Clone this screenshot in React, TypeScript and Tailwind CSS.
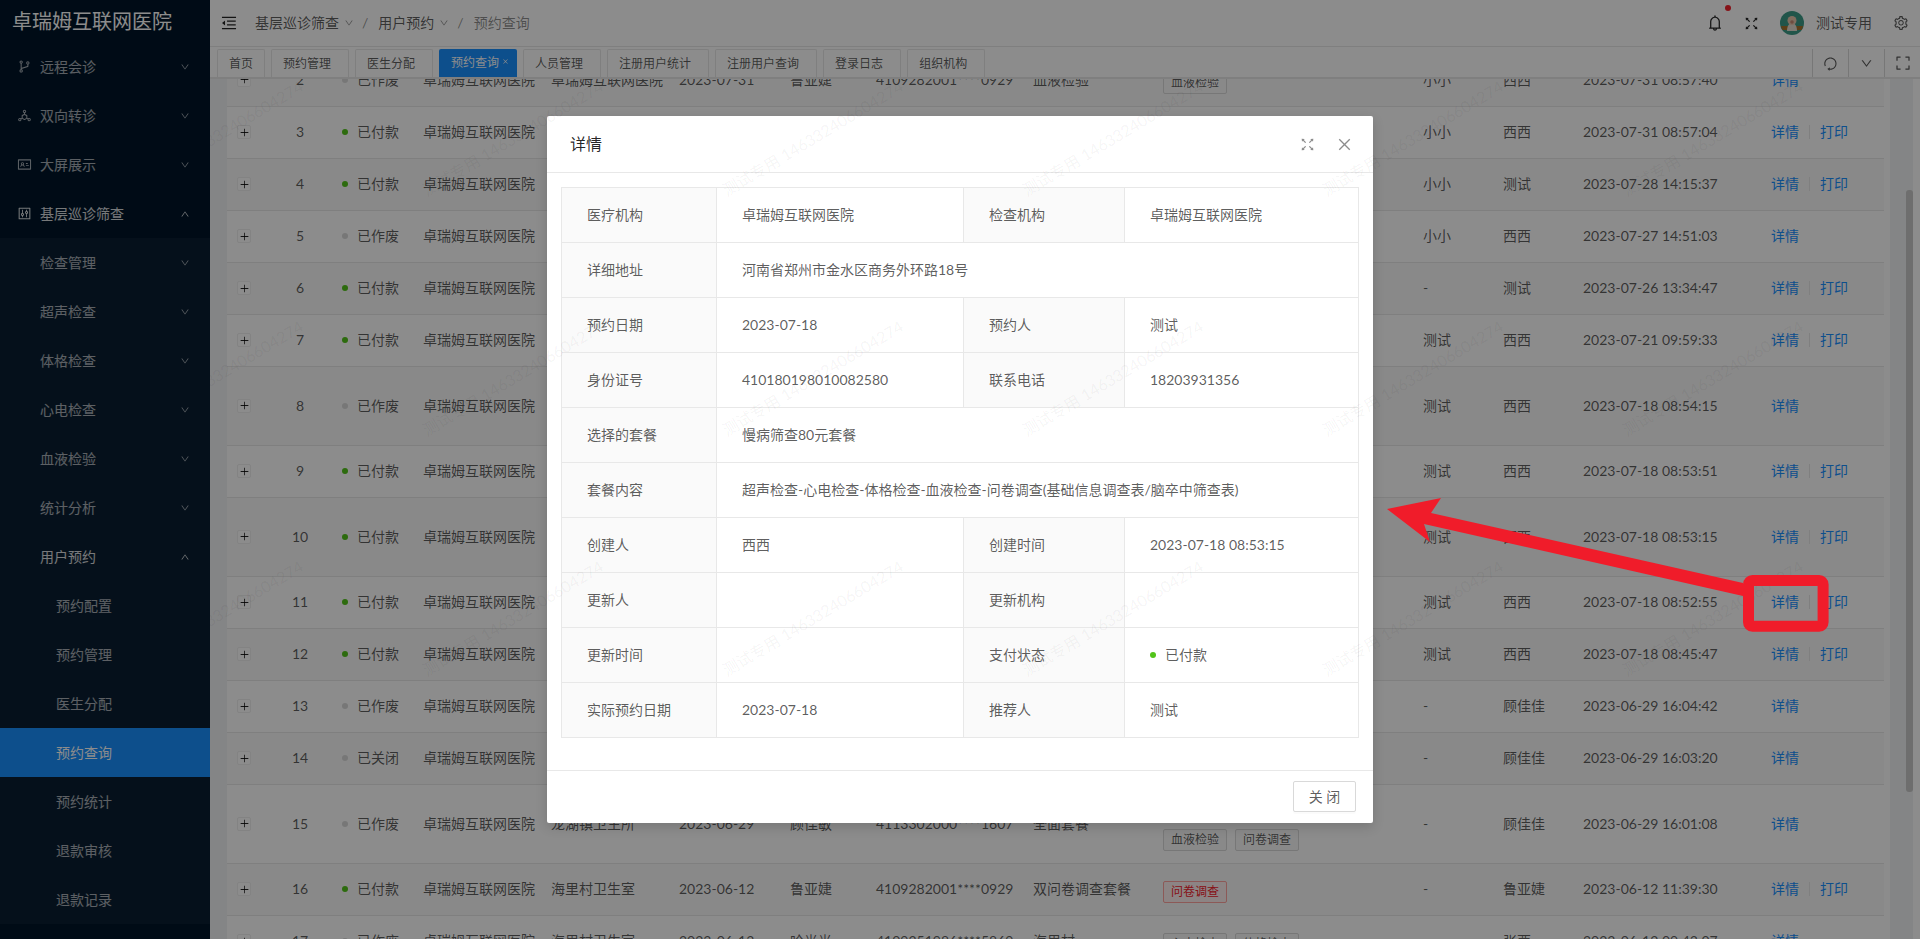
import {
  AiOutlineBell,
  AiOutlineBranches,
  AiOutlineClose,
  AiOutlineControl,
  AiOutlineDeploymentUnit,
  AiOutlineDown,
  AiOutlineExpand,
  AiOutlineFullscreen,
  AiOutlineIdcard,
  AiOutlineMenuFold,
  AiOutlinePlus,
  AiOutlineReload,
  AiOutlineSetting,
  AiOutlineUp,
} from 'react-icons/ai';

const topMenu = [
  { label: '远程会诊', icon: AiOutlineBranches },
  { label: '双向转诊', icon: AiOutlineDeploymentUnit },
  { label: '大屏展示', icon: AiOutlineIdcard },
];

const subMenu = ['检查管理', '超声检查', '体格检查', '心电检查', '血液检验', '统计分析'];
const leafMenu = ['预约配置', '预约管理', '医生分配', '预约查询', '预约统计', '退款审核', '退款记录'];
const tabs = ['首页', '预约管理', '医生分配', '预约查询', '人员管理', '注册用户统计', '注册用户查询', '登录日志', '组织机构'];

type Row = {
  no: number;
  status: string;
  // rows 3-14 sit behind the modal, so these stay empty there
  site?: string;
  date?: string;
  name?: string;
  idNo?: string;
  pkg?: string;
  tags?: string[];
  tall?: boolean;
  red?: boolean;
  creator: string;
  updater: string;
  time: string;
  print: boolean;
};

const rows: Row[] = [
  { no: 2, status: '已作废', site: '卓瑞姆互联网医院', date: '2023-07-31', name: '鲁亚婕', idNo: '4109282001****0929', pkg: '血液检验', tags: ['血液检验'], creator: '小小', updater: '西西', time: '2023-07-31 08:57:40', print: false },
  { no: 3, status: '已付款', creator: '小小', updater: '西西', time: '2023-07-31 08:57:04', print: true },
  { no: 4, status: '已付款', creator: '小小', updater: '测试', time: '2023-07-28 14:15:37', print: true },
  { no: 5, status: '已作废', creator: '小小', updater: '西西', time: '2023-07-27 14:51:03', print: false },
  { no: 6, status: '已付款', creator: '-', updater: '测试', time: '2023-07-26 13:34:47', print: true },
  { no: 7, status: '已付款', creator: '测试', updater: '西西', time: '2023-07-21 09:59:33', print: true },
  { no: 8, status: '已作废', tall: true, creator: '测试', updater: '西西', time: '2023-07-18 08:54:15', print: false },
  { no: 9, status: '已付款', creator: '测试', updater: '西西', time: '2023-07-18 08:53:51', print: true },
  { no: 10, status: '已付款', tall: true, creator: '测试', updater: '西西', time: '2023-07-18 08:53:15', print: true },
  { no: 11, status: '已付款', creator: '测试', updater: '西西', time: '2023-07-18 08:52:55', print: true },
  { no: 12, status: '已付款', creator: '测试', updater: '西西', time: '2023-07-18 08:45:47', print: true },
  { no: 13, status: '已作废', creator: '-', updater: '顾佳佳', time: '2023-06-29 16:04:42', print: false },
  { no: 14, status: '已关闭', creator: '-', updater: '顾佳佳', time: '2023-06-29 16:03:20', print: false },
  { no: 15, status: '已作废', tall: true, site: '龙湖镇卫生所', date: '2023-06-29', name: '顾佳敏', idNo: '4113302000****1607', pkg: '全面套餐', tags: ['血液检验', '问卷调查'], creator: '-', updater: '顾佳佳', time: '2023-06-29 16:01:08', print: false },
  { no: 16, status: '已付款', site: '海里村卫生室', date: '2023-06-12', name: '鲁亚婕', idNo: '4109282001****0929', pkg: '双问卷调查套餐', tags: ['问卷调查'], red: true, creator: '-', updater: '鲁亚婕', time: '2023-06-12 11:39:30', print: true },
  { no: 17, status: '已作废', site: '海里村卫生室', date: '2023-06-13', name: '哈光光', idNo: '4109251986****5869', pkg: '海里村', tags: ['心电检查', '体格检查'], creator: '', updater: '张西', time: '2023-06-12 09:43:07', print: false },
];

const details = [
  [['医疗机构', '卓瑞姆互联网医院'], ['检查机构', '卓瑞姆互联网医院']],
  [['详细地址', '河南省郑州市金水区商务外环路18号']],
  [['预约日期', '2023-07-18'], ['预约人', '测试']],
  [['身份证号', '410180198010082580'], ['联系电话', '18203931356']],
  [['选择的套餐', '慢病筛查80元套餐']],
  [['套餐内容', '超声检查-心电检查-体格检查-血液检查-问卷调查(基础信息调查表/脑卒中筛查表)']],
  [['创建人', '西西'], ['创建时间', '2023-07-18 08:53:15']],
  [['更新人', ''], ['更新机构', '']],
  [['更新时间', ''], ['支付状态', 'paid']],
  [['实际预约日期', '2023-07-18'], ['推荐人', '测试']],
];

function Sidebar() {
  return (
    <aside className="flex h-full w-[210px] shrink-0 flex-col bg-[#001529] text-sm text-white/65">
      <div className="flex h-[42px] items-center pl-[12px] text-[20px] text-white">卓瑞姆互联网医院</div>
      {topMenu.map((m) => (
        <div key={m.label} className="flex h-[49px] items-center pl-[17px] pr-[20px]">
          <m.icon size={15} />
          <span className="ml-[8px]">{m.label}</span>
          <AiOutlineDown size={10} className="ml-auto" />
        </div>
      ))}
      <div className="flex h-[49px] items-center pl-[17px] pr-[20px] text-white/85">
        <AiOutlineControl size={15} />
        <span className="ml-[8px]">基层巡诊筛查</span>
        <AiOutlineUp size={10} className="ml-auto" />
      </div>
      <div className="bg-[#0a1e32]">
        {subMenu.map((m) => (
          <div key={m} className="flex h-[49px] items-center pl-[40px] pr-[20px]">
            <span>{m}</span>
            <AiOutlineDown size={10} className="ml-auto" />
          </div>
        ))}
        <div className="flex h-[49px] items-center pl-[40px] pr-[20px] text-white/85">
          <span>用户预约</span>
          <AiOutlineUp size={10} className="ml-auto" />
        </div>
        {leafMenu.map((m) => (
          <div
            key={m}
            className={`flex h-[49px] items-center pl-[56px] ${m === '预约查询' ? 'bg-[#1890ff] text-white' : ''}`}
          >
            {m}
          </div>
        ))}
      </div>
    </aside>
  );
}

function Header() {
  return (
    <header className="flex h-[47px] shrink-0 items-center border-b border-[#e8e8e8] bg-white pl-[10px] pr-[11px] text-sm text-black/65">
      <AiOutlineMenuFold size={18} className="text-black/85" />
      <span className="ml-[17px]">基层巡诊筛查</span>
      <AiOutlineDown size={10} className="ml-[5px] text-black/45" />
      <span className="ml-[8px] text-black/45">/</span>
      <span className="ml-[10px]">用户预约</span>
      <AiOutlineDown size={10} className="ml-[5px] text-black/45" />
      <span className="ml-[8px] text-black/45">/</span>
      <span className="ml-[10px] text-black/45">预约查询</span>

      <span className="relative ml-auto">
        <AiOutlineBell size={18} className="text-black/85" />
        <span className="absolute right-[-7px] top-[-9px] h-[6px] w-[6px] rounded-full bg-[#f5222d]" />
      </span>
      <AiOutlineFullscreen size={17} className="ml-[19px] text-black/85" />
      <svg viewBox="0 0 24 24" className="ml-[20px] h-[24px] w-[24px] shrink-0">
        <circle cx="12" cy="12" r="12" fill="#3c9c88" />
        <path d="M1 15h22a12 12 0 0 1-1.5 4H2.500A12 12 0 0 1 1 15z" fill="#a8742c" />
        <path d="M7 20c0-5 2-8 5-8s5 3 5 8z" fill="#e6ddd0" />
        <circle cx="12" cy="9.500" r="4.500" fill="#e9c6ac" />
        <circle cx="12" cy="11" r="1.800" fill="#c98a74" />
      </svg>
      <span className="ml-[12px]">测试专用</span>
      <AiOutlineSetting size={16} className="ml-[21px]" />
    </header>
  );
}

function TabBar() {
  return (
    <div className="flex h-[32px] shrink-0 border-b-2 border-[#e8e8e8] bg-white pl-[7px] text-xs text-black/65">
      <div className="flex gap-[6px] pt-[2px]">
        {tabs.map((t, i) =>
          t === '预约查询' ? (
            <div key={t} className="flex items-center rounded-t-[2px] bg-[#1890ff] pl-[12px] pr-[8px] text-white">
              {t}
              <AiOutlineClose size={7} className="mb-[4px] ml-[3px]" />
            </div>
          ) : (
            <div
              key={t}
              className={`flex items-center rounded-t-[2px] border border-b-0 border-[#e8e8e8] pl-[11px] ${i === 0 ? 'pr-[11px]' : 'pr-[17px]'}`}
            >
              {t}
            </div>
          ),
        )}
      </div>
      <div className="ml-auto flex pt-[2px] text-black/65">
        <div className="flex w-[36px] items-center justify-center border-l border-[#d9d9d9]">
          <AiOutlineReload size={15} className="rotate-[135deg]" />
        </div>
        <div className="flex w-[36px] items-center justify-center border-l border-[#d9d9d9]">
          <AiOutlineDown size={13} />
        </div>
        <div className="flex w-[36px] items-center justify-center border-l border-[#d9d9d9]">
          <AiOutlineExpand size={16} />
        </div>
      </div>
    </div>
  );
}

function Tag({ text, red }: { text: string; red?: boolean }) {
  return (
    <span
      className={`flex h-[22px] w-[64px] items-center justify-center rounded-[2px] border text-xs ${
        red ? 'border-[#ffa39e] bg-[#fff1f0] text-[#f5222d]' : 'border-[#d9d9d9] bg-[#fafafa] text-black/65'
      }`}
    >
      {text}
    </span>
  );
}

function DataTable() {
  return (
    <div className="h-full w-[1657px] shrink-0 overflow-hidden bg-white">
      <table className="-mt-[25px] w-[1657px] table-fixed border-collapse text-sm text-black/65">
        <colgroup>
          <col className="w-[42px]" />
          <col className="w-[62px]" />
          <col className="w-[81px]" />
          <col className="w-[128px]" />
          <col className="w-[128px]" />
          <col className="w-[111px]" />
          <col className="w-[86px]" />
          <col className="w-[157px]" />
          <col className="w-[130px]" />
          <col className="w-[260px]" />
          <col className="w-[80px]" />
          <col className="w-[80px]" />
          <col className="w-[188px]" />
          <col className="w-[124px]" />
        </colgroup>
        <tbody>
          {rows.map((r) => (
            <tr
              key={r.no}
              className={`border-b border-[#e8e8e8] ${r.tall ? 'h-[79px]' : 'h-[52px]'} ${r.no % 2 === 0 ? 'bg-[#fafafa]' : ''}`}
            >
              <td className="pl-[10px]">
                <span className="flex h-[14px] w-[14px] items-center justify-center rounded-[2px] border border-[#eeeeee] bg-white text-black/85">
                  <AiOutlinePlus size={11} />
                </span>
              </td>
              <td className="text-center">{r.no}</td>
              <td className="pl-[11px]">
                <span className="flex items-center gap-[9px]">
                  <i className={`h-[6px] w-[6px] rounded-full ${r.status === '已付款' ? 'bg-[#52c41a]' : 'bg-[#d9d9d9]'}`} />
                  {r.status}
                </span>
              </td>
              <td className="pl-[11px]">卓瑞姆互联网医院</td>
              <td className="pl-[11px]">{r.site}</td>
              <td className="pl-[11px]">{r.date}</td>
              <td className="pl-[11px]">{r.name}</td>
              <td className="pl-[11px]">{r.idNo}</td>
              <td className="pl-[11px]">{r.pkg}</td>
              <td className="pb-[12px] pl-[11px] align-bottom">
                <div className="flex flex-wrap gap-x-[8px] gap-y-[5px]">
                  {r.tags?.map((t) => (
                    <Tag key={t} text={t} red={r.red} />
                  ))}
                </div>
              </td>
              <td className="pl-[11px]">{r.creator}</td>
              <td className="pl-[11px]">{r.updater}</td>
              <td className="pl-[11px]">{r.time}</td>
              <td className="pl-[11px] text-[#1890ff]">
                <span className="flex items-center">
                  详情
                  {r.print && (
                    <>
                      <i className="ml-[10px] mr-[10px] h-[14px] w-px bg-[#e8e8e8]" />
                      打印
                    </>
                  )}
                </span>
              </td>
            </tr>
          ))}
        </tbody>
      </table>
    </div>
  );
}

function DetailModal() {
  return (
    <div className="absolute left-[547px] top-[116px] flex h-[707px] w-[826px] flex-col rounded-[2px] bg-white text-sm text-black/65 shadow-[0_4px_12px_rgba(0,0,0,0.15)]">
      <div className="flex h-[57px] shrink-0 items-center border-b border-[#e8e8e8] pl-[23px] pr-[20px]">
        <span className="text-base text-black/85">详情</span>
        <AiOutlineFullscreen size={17} className="ml-auto text-black/45" />
        <AiOutlineClose size={17} className="ml-[20px] text-black/45" />
      </div>
      <div className="flex-1 px-[14px] pt-[14px]">
        <table className="w-[797px] table-fixed border-collapse border border-[#e8e8e8]">
          <colgroup>
            <col className="w-[155px]" />
            <col className="w-[247px]" />
            <col className="w-[161px]" />
            <col className="w-[234px]" />
          </colgroup>
          <tbody>
            {details.map((row) => (
              <tr key={row[0][0]} className="h-[55px] border-b border-[#e8e8e8]">
                {row.map(([label, value]) => (
                  <DetailCell key={label} label={label} value={value} wide={row.length === 1} />
                ))}
              </tr>
            ))}
          </tbody>
        </table>
      </div>
      <div className="flex h-[53px] shrink-0 items-start justify-end border-t border-[#e8e8e8] pr-[17px] pt-[10px]">
        <button className="h-[31px] w-[63px] rounded-[2px] border border-[#d9d9d9] bg-white text-sm text-black/65 shadow-[0_2px_0_rgba(0,0,0,0.015)]">
          关 闭
        </button>
      </div>
    </div>
  );
}

function DetailCell({ label, value, wide }: { label: string; value: string; wide: boolean }) {
  return (
    <>
      <td className="border-r border-[#e8e8e8] bg-[#fafafa] pl-[25px]">{label}</td>
      <td colSpan={wide ? 3 : 1} className="border-r border-[#e8e8e8] pl-[25px]">
        {value === 'paid' ? (
          <span className="flex items-center gap-[9px]">
            <i className="h-[6px] w-[6px] rounded-full bg-[#52c41a]" />
            已付款
          </span>
        ) : (
          value
        )}
      </td>
    </>
  );
}

function Watermark() {
  const cells = Array.from({ length: 24 }, (_, i) => i);
  return (
    <div className="pointer-events-none absolute bottom-0 left-[210px] right-0 top-[79px] overflow-hidden">
      <div className="-ml-[80px] -mt-[141px] grid w-[1800px] auto-rows-[240px] grid-cols-[repeat(6,300px)]">
        {cells.map((i) => (
          <div key={i} className="h-[24px]">
            <span className="inline-block origin-bottom-left -rotate-[31deg] whitespace-nowrap text-base leading-[24px] text-black/[0.05]">
              测试专用 146332406604274
            </span>
          </div>
        ))}
      </div>
    </div>
  );
}

export default function App() {
  return (
    <div className="relative h-screen w-full overflow-hidden bg-white font-['Lato','Noto_Sans_CJK_SC',sans-serif]">
      <div className="flex h-full">
        <Sidebar />
        <main className="flex h-full min-w-0 flex-1 flex-col">
          <Header />
          <TabBar />
          <div className="flex min-h-0 flex-1 bg-[#f0f2f5] pl-[17px]">
            <DataTable />
            <div className="w-[6px] shrink-0 bg-white" />
            <div className="flex w-[23px] shrink-0 justify-end pt-[111px]">
              <div className="h-[602px] w-[7px] rounded-[3px] bg-[#c8c8c8]" />
            </div>
            <div className="flex-1 bg-white" />
          </div>
        </main>
      </div>

      {/* modal mask */}
      <div className="absolute inset-0 bg-black/45" />
      <DetailModal />
      <Watermark />

      {/* red marker drawn on the screenshot */}
      <svg className="pointer-events-none absolute inset-0 h-full w-full" viewBox="0 0 1920 939">
        <polygon
          points="1387,509 1441,498 1431,513 1743,583 1743,596 1424,524 1430,542"
          fill="#f01c2a"
        />
        <rect x="1748.5" y="580.5" width="74.6" height="45.7" rx="4" fill="none" stroke="#f01c2a" strokeWidth="11" />
      </svg>
    </div>
  );
}
